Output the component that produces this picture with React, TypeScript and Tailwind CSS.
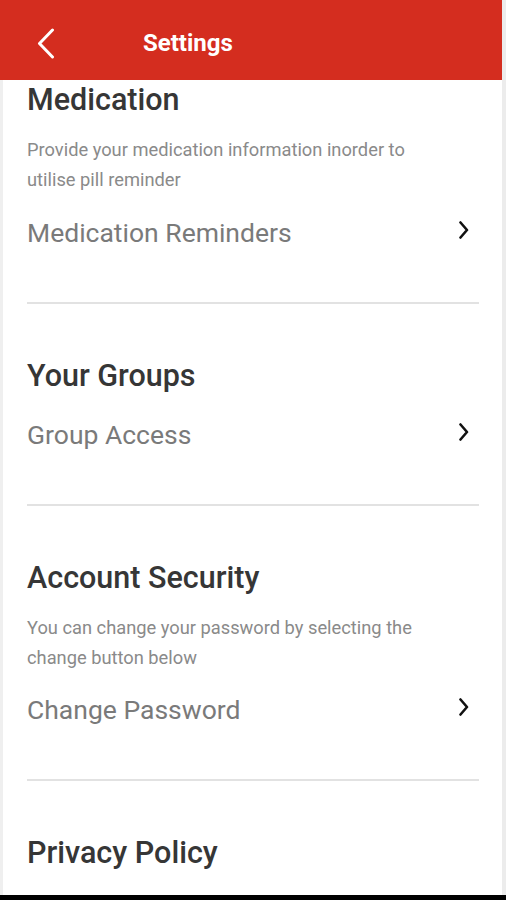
import React from "react";

const font = { fontFamily: "Roboto, 'Noto Sans', Arial, sans-serif" };

function ChevronRight() {
  return (
    <svg width="10" height="18" viewBox="0 0 10 18" fill="none">
      <path d="M1.5 1.5 L8 9 L1.5 16.5" stroke="#111" strokeWidth="2.6" strokeLinecap="round" strokeLinejoin="round" />
    </svg>
  );
}

function Item({ label, mt }: { label: string; mt: string }) {
  return (
    <div className={`flex items-center justify-between h-[40px] ${mt}`}>
      <span className="text-[26.5px] leading-[40px] text-[#7a7a7a]">{label}</span>
      <span className="mr-[10px] mb-[6px] flex items-center">
        <ChevronRight />
      </span>
    </div>
  );
}

function Heading({ children, mt }: { children: React.ReactNode; mt: string }) {
  return <h2 className={`text-[30.5px] leading-[36px] font-medium text-[#363636] ${mt}`}>{children}</h2>;
}

function Desc({ children }: { children: React.ReactNode }) {
  return <p className="mt-[17px] text-[18.3px] leading-[30px] text-[#8a8a8a]">{children}</p>;
}

function Divider() {
  return <div className="mt-[49px] h-[2px] bg-[#e2e2e2]" />;
}

export default function App() {
  return (
    <div className="relative h-[900px] w-[506px] overflow-hidden bg-[#efefef]" style={font}>
      <div className="flex h-full">
        <div className="flex w-[502px] flex-col bg-white">
          <header className="flex h-[80px] shrink-0 items-center bg-[#d42d1f] pt-[6px]">
            <div className="ml-[37px] flex items-center">
              <svg width="18" height="31" viewBox="0 0 18 31" fill="none">
                <path d="M15.5 2 L2.5 15.5 L15.5 29" stroke="#fff" strokeWidth="3" strokeLinecap="round" strokeLinejoin="round" />
              </svg>
            </div>
            <h1 className="ml-[88px] text-[24px] font-bold text-white">Settings</h1>
          </header>
          <main className="flex-1 border-l-[3px] border-[#efefef] pl-[24px] pr-[23px]">
            <Heading mt="mt-[2px]">Medication</Heading>
            <Desc>
              Provide your medication information inorder to
              <br />
              utilise pill reminder
            </Desc>
            <Item label="Medication Reminders" mt="mt-[18px]" />
            <Divider />

            <Heading mt="mt-[54px]">Your Groups</Heading>
            <Item label="Group Access" mt="mt-[21px]" />
            <Divider />

            <Heading mt="mt-[54px]">Account Security</Heading>
            <Desc>
              You can change your password by selecting the
              <br />
              change button below
            </Desc>
            <Item label="Change Password" mt="mt-[17px]" />
            <Divider />

            <Heading mt="mt-[54px]">Privacy Policy</Heading>
          </main>
        </div>
        <div className="w-[4px] bg-[#ececec]" />
      </div>
      <div className="absolute bottom-0 left-0 h-[5px] w-full bg-black" />
    </div>
  );
}
